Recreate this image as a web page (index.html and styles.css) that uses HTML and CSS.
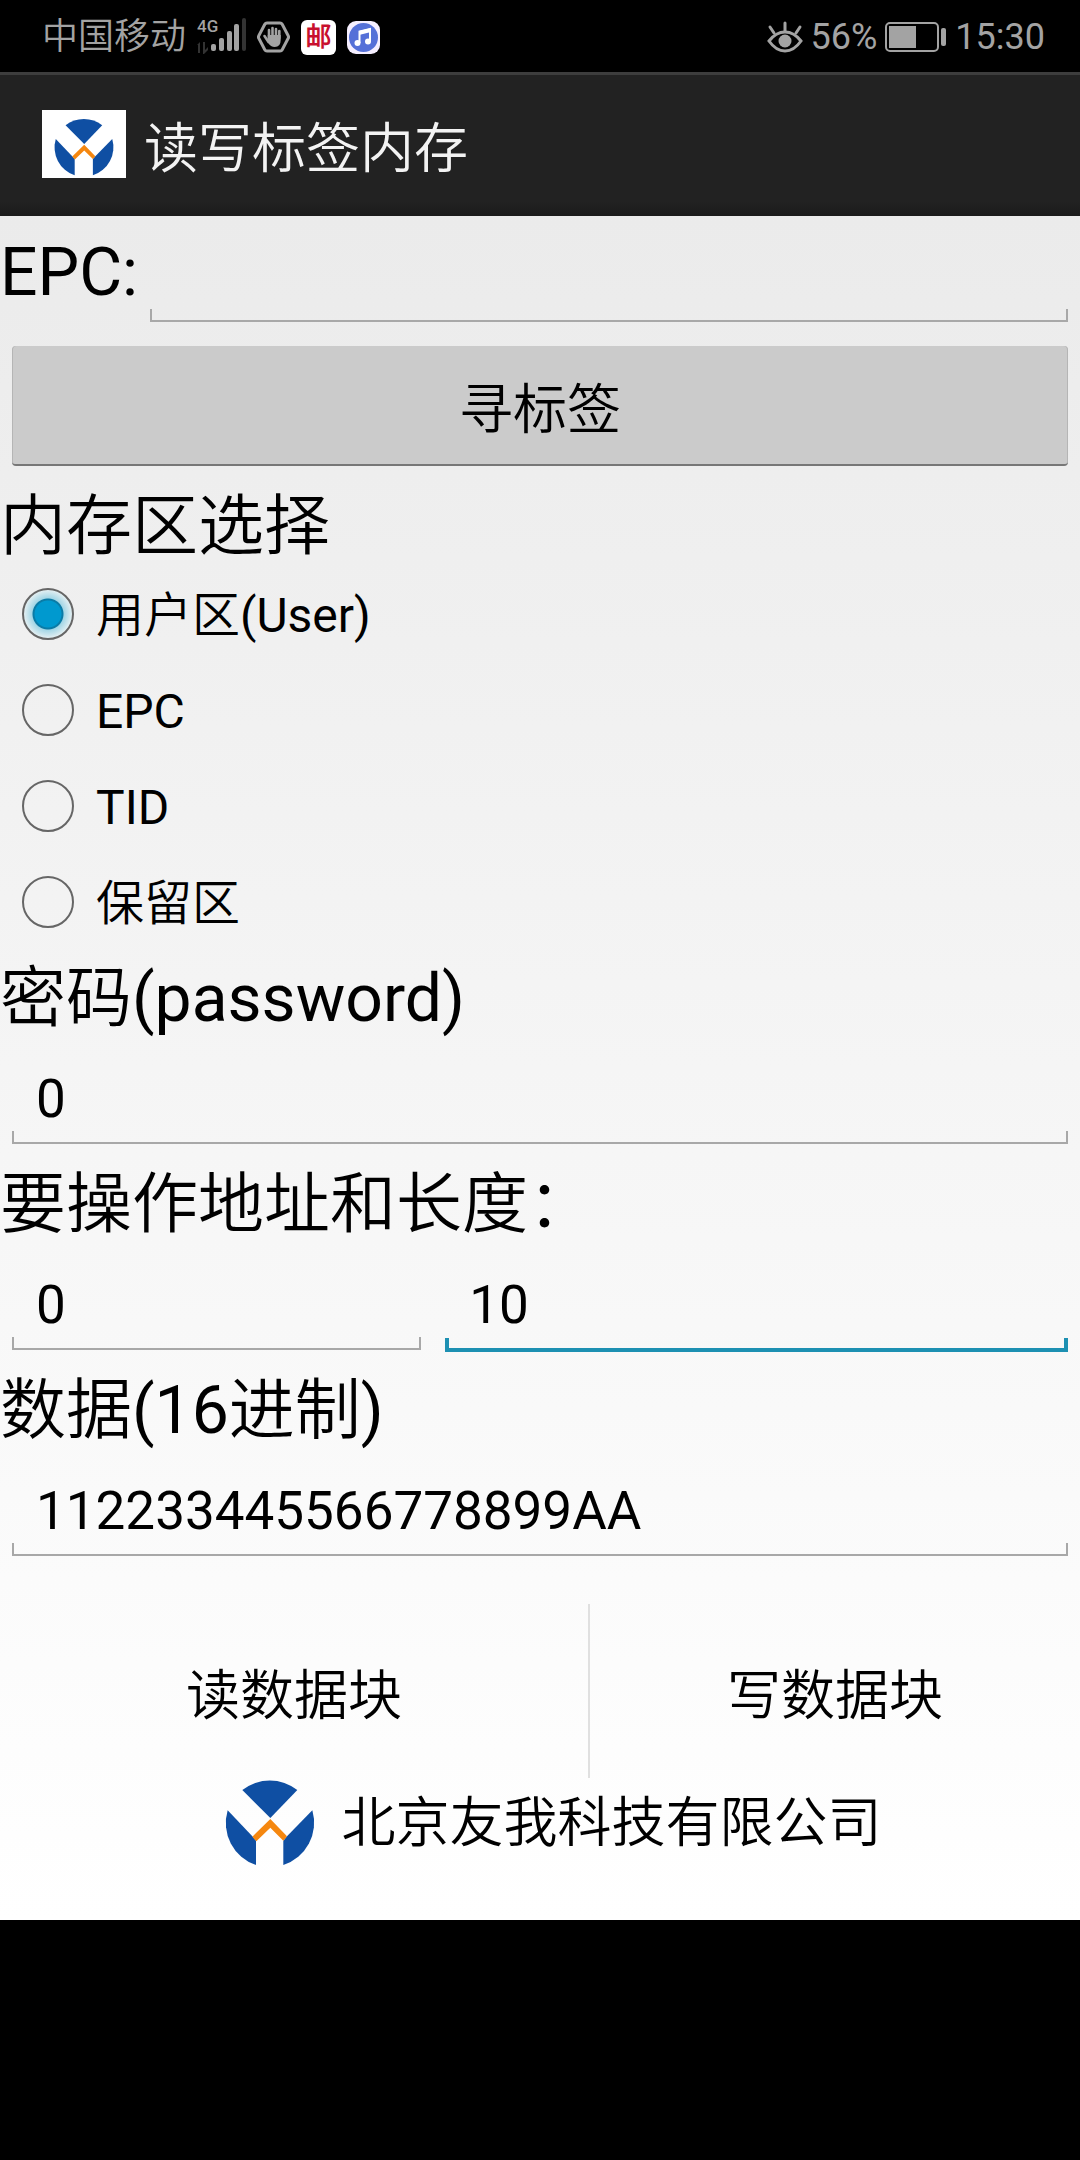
FILE: index.html
```
<!DOCTYPE html>
<html lang="zh-CN">
<head>
    <meta charset="UTF-8">
    <meta name="viewport" content="width=device-width, initial-scale=1.0">
    <title>读写标签内存</title>
    <link rel="stylesheet" href="styles.css">
</head>
<body>
    <!-- Logo, used in the title bar and in the footer -->
    <svg class="sprite" aria-hidden="true">
        <symbol id="logo" viewBox="171 531 378 306">
            <path fill="#0f4fa3" d="M277 600A133 133 0 0 1 442 600L361 684Z"/>
            <path fill="#0f4fa3" d="M233 661L307 739L318 752V825A133 133 0 0 1 233 661Z"/>
            <path fill="#0f4fa3" d="M487 661L411 739L400 752V825A133 133 0 0 0 487 661Z"/>
            <path fill="#f5870f" d="M361 687L411 739L400 752L361 713L319 754L307 740Z"/>
        </symbol>
    </svg>

    <div class="status">
        <span>中国移动</span>
        <svg width="49" height="40" viewBox="0 0 49 40">
            <text class="network" x="0" y="15">4G</text>
            <g fill="#333">
                <path d="M0 28l3-3v11h-2v-8zM6 25h2v8l3-3v3l-4 4h-1z"/>
                <rect x="45" y="1" width="4" height="33" rx="2"/>
            </g>
            <g fill="#a3a3a3">
                <rect x="14" y="27" width="5" height="7" rx="2"/>
                <rect x="22" y="21" width="5" height="13" rx="2"/>
                <rect x="30" y="14" width="5" height="20" rx="2"/>
                <rect x="37" y="7" width="5" height="27" rx="2"/>
            </g>
        </svg>
        <svg width="33" height="36" viewBox="0 0 33 36">
            <path d="M10 4h13q1.500 0 2.200 1.300l6 11.400q.7 1.300 0 2.600l-6 11.400q-.7 1.300-2.200 1.300h-13q-1.500 0-2.200-1.300l-6-11.400q-.7-1.300 0-2.600l6-11.400Q8.500 4 10 4z" fill="none" stroke="#a3a3a3" stroke-width="3"/>
            <path d="M12 19V11M15.500 18V9M19 18V10M22.300 19V12M7.500 17l4 6" stroke="#a3a3a3" stroke-width="2.600" stroke-linecap="round"/>
            <path d="M10.700 16h13v5q0 7-6 7-4 0-6.500-4z" fill="#a3a3a3"/>
        </svg>
        <span class="mail">邮</span>
        <svg width="33" height="33" viewBox="0 0 33 33">
            <rect width="33" height="33" rx="9" fill="#f6efff"/>
            <circle cx="16.500" cy="16.500" r="14.500" fill="#5570d8"/>
            <path d="M12.500 22V10.500L23 8v12" fill="none" stroke="#fff" stroke-width="2"/>
            <path d="M12 10l12-3v4l-12 3z" fill="#fff"/>
            <circle cx="10.500" cy="22" r="3" fill="#fff"/>
            <circle cx="21" cy="20.500" r="3" fill="#fff"/>
        </svg>

        <div class="status-right">
            <svg width="36" height="36" viewBox="0 0 36 36">
                <g fill="none" stroke="#a3a3a3" stroke-width="3" stroke-linecap="round">
                    <path d="M2 22Q9 13 18 13T34 22Q27 32 18 32T2 22z"/>
                    <path d="M18 4v8M3 8l4 6M33 8l-4 6"/>
                </g>
                <circle cx="18" cy="22" r="6.500" fill="#a3a3a3"/>
            </svg>
            <span>56%</span>
            <svg width="62" height="30" viewBox="0 0 62 30">
                <rect x="1" y="1" width="52" height="28" rx="4" fill="none" stroke="#a3a3a3" stroke-width="2"/>
                <rect x="4" y="4" width="27" height="22" fill="#a3a3a3"/>
                <rect x="56" y="6" width="5" height="18" rx="2" fill="#a3a3a3"/>
            </svg>
            <span>15:30</span>
        </div>
    </div>

    <header>
        <svg class="logo"><use href="#logo"/></svg>
        <h1>读写标签内存</h1>
    </header>

    <main>
        <form>
            <div class="epc">
                <label for="epc">EPC:</label>
                <input type="text" id="epc">
            </div>
            <button type="button" class="search">寻标签</button>

            <fieldset>
                <legend>内存区选择</legend>
                <label class="option"><input type="radio" name="area" checked><span>用户区(User)</span></label>
                <label class="option"><input type="radio" name="area"><span>EPC</span></label>
                <label class="option"><input type="radio" name="area"><span>TID</span></label>
                <label class="option"><input type="radio" name="area"><span>保留区</span></label>
            </fieldset>

            <label class="title" for="password">密码(password)</label>
            <input type="text" id="password" value="0">

            <label class="title" for="address">要操作地址和长度：</label>
            <div class="range">
                <input type="text" id="address" value="0">
                <input type="text" class="active" value="10" aria-label="长度">
            </div>

            <label class="title" for="data">数据(16进制)</label>
            <input type="text" id="data" value="112233445566778899AA">

            <div class="actions">
                <button type="button">读数据块</button>
                <button type="button">写数据块</button>
            </div>
        </form>

        <footer>
            <svg class="logo"><use href="#logo"/></svg>
            <span>北京友我科技有限公司</span>
        </footer>
    </main>
</body>
</html>
```
FILE: styles.css
```
*{
    box-sizing: border-box;
}

body{
    margin: 0;
    background-color: #000;
    color: #000;
    font-family: Roboto, 'Noto Sans CJK SC DemiLight', 'Noto Sans CJK SC Light', 'Noto Sans CJK SC', sans-serif;
    font-size: 54px;
}

input, button{
    font: inherit;
    color: inherit;
    border: 0;
    background: none;
}

.sprite{
    display: none;
}

/* Status bar */
.status{
    display: flex;
    align-items: center;
    gap: 11px;
    height: 72px;
    padding: 2px 35px 0 42px;
    color: #a3a3a3;
    font-size: 36px;
    line-height: 72px;
}

.network{
    fill: #a3a3a3;
    font-size: 17px;
    font-weight: 500;
}

.mail{
    width: 35px;
    height: 35px;
    border-radius: 6px;
    background-color: #fff;
    color: #c8102e;
    font-size: 26px;
    font-weight: 700;
    line-height: 35px;
    text-align: center;
}

.status-right{
    display: flex;
    align-items: center;
    gap: 8px;
    margin-left: auto;
}

/* Title bar */
header{
    display: flex;
    align-items: center;
    gap: 18px;
    height: 144px;
    padding: 0 42px;
    background: linear-gradient(#3d3d3d 3px, #222 3px, #222 130px, #1b1b1b);
    color: #f3f3f3;

    .logo{
        width: 84px;
        height: 68px;
        background-color: #fff;
    }

    h1{
        margin: 0;
        font-size: 54px;
        font-weight: 400;
    }
}

main{
    padding-bottom: 62px;
    background: linear-gradient(#ebebeb, #fff);
}

form{
    display: flex;
    flex-direction: column;
}

/* Text boxes: a line with a short tick at both ends */
input[type="text"]{
    --line: #a8a8a8;
    min-width: 0;
    height: 108px;
    margin: 0 12px 10px;
    padding: 14px 24px 0;
    font-size: 53px;
    outline: 0;
    background:
        linear-gradient(var(--line), var(--line)) 0 104px / 100% 2px no-repeat,
        linear-gradient(var(--line), var(--line)) 0 93px / 2px 12px no-repeat,
        linear-gradient(var(--line), var(--line)) 100% 93px / 2px 12px no-repeat;

    &.active{
        --line: #1d90b2;
        background-size: 100% 4px, 4px 14px, 4px 14px;
        background-position: 0 104px, 0 94px, 100% 94px;
    }
}

.epc{
    display: flex;
    align-items: baseline;

    label{
        font-size: 66px;
        line-height: 77px;
    }

    input{
        flex-grow: 1;
    }
}

.search{
    height: 120px;
    margin: 12px;
    padding: 0;
    border-bottom: 2px solid #777;
    border-radius: 4px;
    background-color: #cbcbcb;
    box-shadow: inset 1px 0 #b5b5b5, inset -1px 0 #b5b5b5;
}

fieldset{
    margin: 0;
    padding: 0;
    border: 0;
}

legend, .title{
    height: 88px;
    padding: 10px 0 0;
    font-size: 66px;
    line-height: 77px;
}

.option{
    display: flex;
    align-items: center;
    height: 96px;
    font-size: 48px;
    line-height: 60px;

    span{
        padding-top: 4px;
    }

    input{
        appearance: none;
        width: 52px;
        height: 52px;
        margin: 0 22px;
        border: 2px solid #666;
        border-radius: 50%;

        &:checked{
            background: radial-gradient(circle, #0099cf 13px, #0a7ba6 14px, #0a7ba6 15px, #a3d6e6 16px, #e3eff2 24px);
        }
    }
}

.range{
    display: grid;
    grid-template-columns: 67fr 100fr;
}

.actions{
    display: grid;
    grid-template-columns: 49fr 41fr;
    padding-top: 36px;

    button{
        height: 174px;
        padding: 0;
    }

    button + button{
        border-left: 2px solid #e0e0e0;
    }
}

footer{
    display: flex;
    align-items: center;
    justify-content: center;
    gap: 9px;
    height: 80px;
    padding-left: 8px;

    .logo{
        width: 126px;
        height: 102px;
    }
}
```
